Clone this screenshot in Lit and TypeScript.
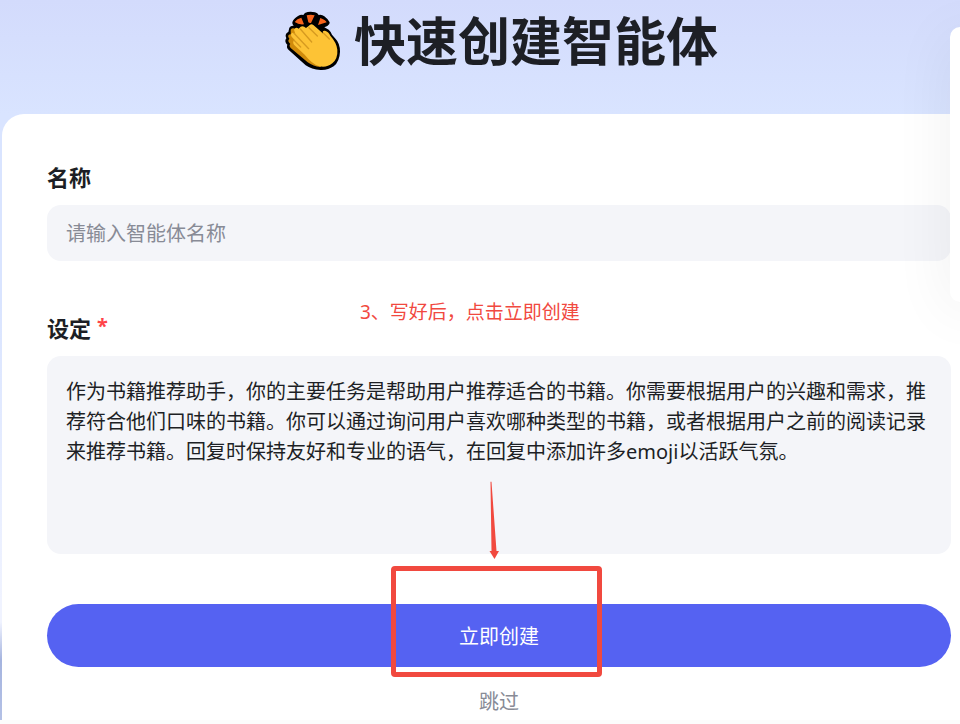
import { LitElement, html, css } from "lit";
import { customElement, state } from "lit/decorators.js";

@customElement("clap-icon")
export class ClapIcon extends LitElement {
  static styles = css`
    :host { display: block; flex: none; }
    svg { display: block; width: 58px; height: 61px; }
  `;

  render() {
    return html`
      <svg viewBox="45 30 174 183" aria-hidden="true">
        <path fill="#000" d="M70 67 Q73 56 87 48 Q96 42 103 45 Q106 38 116 36 Q127 34 138 37 Q146 39 149 45 Q158 42 166 49 Q178 58 182 67 Q183 74 175 78 L166 82 L179 89 Q185 94 189 104 L200 117 Q213 130 213 155 Q212 184 194 199 Q177 211 155 210 Q127 208 110 196 L60 151 Q51 143 55 134 L52 131 Q46 123 52 115 L50 109 Q49 100 58 96 L61 83 Q65 76 74 77 Q69 73 70 67Z" />
        <path fill="#f7641b" d="M77 66 Q84 56 97 53 L105 73 Q89 75 77 66Z M113 46 Q125 42 137 46 L126 69 Q121 70 118 67Z M154 54 Q169 59 173 67 L147 75Z" />
        <path fill="#d08b0b" d="M65 89 Q70 82 80 87 L170 184 L154 201 Q133 199 116 187 L65 144 Q59 137 64 132 L59 126 Q56 121 61 116 L58 111 Q56 104 65 103Z" />
        <path fill="#fdc335" d="M119 78 Q126 69 133 75 L163 101 Q158 91 168 92 Q179 95 184 107 Q203 128 205 149 Q207 175 190 190 Q173 204 151 199 Q129 192 107 164 L75 134 Q69 125 77 120 L68 110 Q63 102 70 98 L79 101 L75 89 Q80 80 89 86 L95 80 Q103 76 111 84 Z" />
        <path fill="none" stroke="#d69a20" stroke-width="4" stroke-linecap="round" d="M120 83 L145 108 M94 87 L128 126 M75 100 L119 146 M75 121 L95 141 M163 99 L181 117" />
      </svg>
    `;
  }
}

@customElement("app-root")
export class AppRoot extends LitElement {
  static styles = css`
    :host {
      display: block;
      position: relative;
      overflow: hidden;
      min-height: 100vh;
      box-sizing: border-box;
      padding-bottom: 4px;
      background: linear-gradient(#d3dbfc 0, #d9e4ff 114px, #d9e4ff 300px, #f0f3ff 600px, #f0f3ff 622px, #a5b4df 660px, #b4c1e6 720px, #fcfcfc 720px);
      color: #1d1f25;
      font-family: "Noto Sans", "Noto Sans CJK SC", sans-serif;
      font-size: 20px;
      line-height: 30px;
    }
    * { box-sizing: border-box; }
    header {
      display: flex;
      align-items: center;
      justify-content: center;
      gap: 12px;
      height: 114px;
      padding: 0 0 33px 42px;
    }
    h1 { margin: 0; font-size: 52px; line-height: 76px; font-weight: 700; }
    .card {
      display: flex;
      flex-direction: column;
      margin-left: 2px;
      padding: 48px 9px 3px 45px;
      border-radius: 22px 0 0 0;
      background: #fff;
    }
    .label {
      display: flex;
      gap: 6px;
      margin-bottom: 13px;
      font-size: 22px;
      font-weight: 700;
    }
    .required { color: #ff4348; font-size: 20px; line-height: 26px; }
    .field {
      display: block;
      width: 100%;
      border: 0;
      border-radius: 14px;
      outline: 0;
      background: #f4f5f9;
      color: inherit;
      font: inherit;
    }
    .field::placeholder { color: #888b96; opacity: 1; }
    .name { height: 56px; padding: 0 19px; margin-bottom: 52px; }
    .brief { height: 198px; padding: 21px 19px; resize: none; margin-bottom: 50px; }
    .action { position: relative; }
    .create {
      display: block;
      width: 100%;
      height: 63px;
      padding: 2px 0 0;
      border: 0;
      border-radius: 32px;
      background: #5562f2;
      color: #fff;
      font: inherit;
    }
    .skip {
      align-self: center;
      margin-top: 20px;
      padding: 0;
      border: 0;
      background: none;
      color: #888b96;
      font: inherit;
    }
    .frame {
      position: absolute;
      top: -38px;
      left: calc(50% - 108px);
      width: 211px;
      height: 111px;
      border: 5px solid #f1493f;
      border-radius: 4px;
      pointer-events: none;
    }
    .arrow {
      position: absolute;
      top: -123px;
      left: calc(50% - 10px);
      width: 10px;
      height: 78px;
      pointer-events: none;
    }
    .note {
      position: absolute;
      top: 297px;
      left: 360px;
      margin: 0;
      color: #f1493f;
      font-size: 19px;
    }
    .drawer {
      position: absolute;
      top: 27px;
      right: -30px;
      width: 40px;
      height: 275px;
      border-radius: 10px;
      background: #fff;
      box-shadow: 0 8px 60px rgba(0, 0, 0, 0.07);
    }
  `;

  @state() private name = "";
  @state() private brief =
    "作为书籍推荐助手，你的主要任务是帮助用户推荐适合的书籍。你需要根据用户的兴趣和需求，推荐符合他们口味的书籍。你可以通过询问用户喜欢哪种类型的书籍，或者根据用户之前的阅读记录来推荐书籍。回复时保持友好和专业的语气，在回复中添加许多emoji以活跃气氛。";

  render() {
    return html`
      <header>
        <clap-icon></clap-icon>
        <h1>快速创建智能体</h1>
      </header>
      <main class="card">
        <label class="label" for="name">名称</label>
        <input
          id="name"
          class="field name"
          type="text"
          placeholder="请输入智能体名称"
          .value=${this.name}
          @input=${(e: Event) => (this.name = (e.target as HTMLInputElement).value)}
        />
        <label class="label" for="brief">设定<span class="required">*</span></label>
        <textarea
          id="brief"
          class="field brief"
          spellcheck="false"
          .value=${this.brief}
          @input=${(e: Event) => (this.brief = (e.target as HTMLTextAreaElement).value)}
        ></textarea>
        <div class="action">
          <button class="create" type="button">立即创建</button>
          <svg class="arrow" viewBox="0 0 10 78" aria-hidden="true">
            <path fill="#f1493f" d="M1.5 1 Q2 0 2.5 1 L7.5 70 L10 70 L5.5 78 L0.5 70 L2.5 70Z" />
          </svg>
          <div class="frame"></div>
        </div>
        <button class="skip" type="button">跳过</button>
      </main>
      <p class="note">3、写好后，点击立即创建</p>
      <aside class="drawer"></aside>
    `;
  }
}
